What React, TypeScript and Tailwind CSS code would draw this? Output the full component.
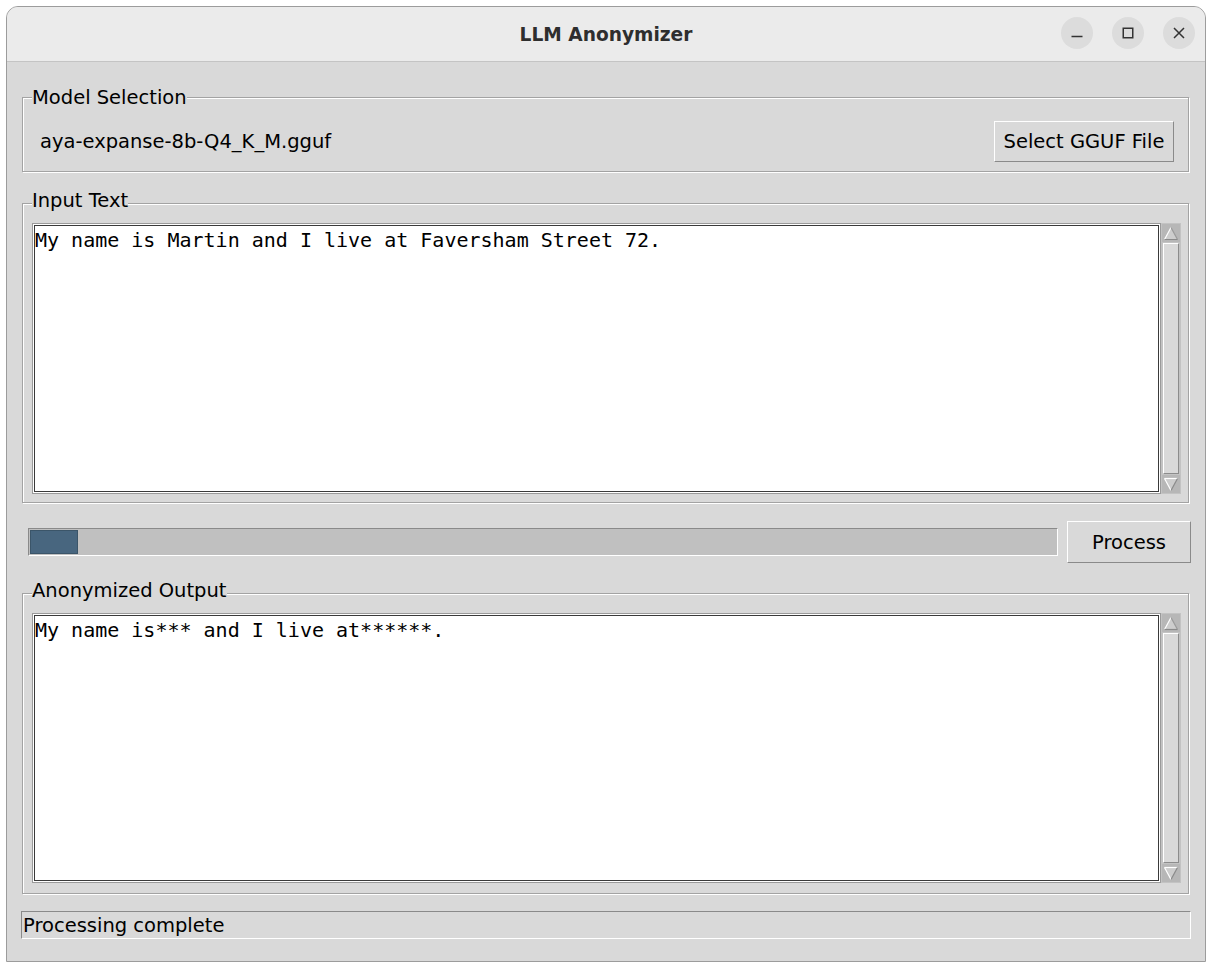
import React from "react";

function Arrow({ up }: { up: boolean }) {
  return (
    <div className="h-[18px] bg-[#b7b7b7] flex items-center justify-center shrink-0">
      {up ? (
        <svg width="16" height="15" viewBox="0 0 16 15">
          <polygon points="8,1.5 14.5,13.5 1.5,13.5" fill="#cdcdcd" />
          <line x1="8" y1="1.5" x2="1.5" y2="13.5" stroke="#ffffff" strokeWidth="1.2" />
          <line x1="8" y1="1.5" x2="14.5" y2="13.5" stroke="#9a9a9a" strokeWidth="1.2" />
          <line x1="1.5" y1="13.5" x2="14.5" y2="13.5" stroke="#8a8a8a" strokeWidth="1.2" />
        </svg>
      ) : (
        <svg width="16" height="15" viewBox="0 0 16 15">
          <polygon points="1.5,1.5 14.5,1.5 8,13.5" fill="#cdcdcd" />
          <line x1="1.5" y1="1.5" x2="14.5" y2="1.5" stroke="#ffffff" strokeWidth="1.2" />
          <line x1="1.5" y1="1.5" x2="8" y2="13.5" stroke="#ffffff" strokeWidth="1.2" />
          <line x1="14.5" y1="1.5" x2="8" y2="13.5" stroke="#8a8a8a" strokeWidth="1.2" />
        </svg>
      )}
    </div>
  );
}

function Scrollbar() {
  return (
    <div className="w-[20px] flex flex-col bg-[#c3c3c3] p-[1px] shrink-0">
      <Arrow up />
      <div className="flex-1 mx-[1px] my-[1px] bg-[#d9d9d9] border border-t-white border-l-white border-r-[#8c8c8c] border-b-[#8c8c8c]" />
      <Arrow up={false} />
    </div>
  );
}

function TextBox({ text, h }: { text: string; h: string }) {
  return (
    <div className={"flex " + h}>
      <div className="flex-1 bg-white border border-[#9a9a9a] shadow-[inset_0_0_0_1px_#fff,inset_0_0_0_2px_#3a3a3a] pt-[5px] pl-[2px] font-['DejaVu_Sans_Mono',monospace] text-[20px] leading-[23px] text-black whitespace-pre">
        {text}
      </div>
      <Scrollbar />
    </div>
  );
}

function GroupLabel({ children, up }: { children: React.ReactNode; up?: boolean }) {
  return (
    <div
      className={
        (up ? "-mt-[15px] mb-[3px]" : "-mt-[12px]") +
        " ml-[9px] self-start bg-[#d9d9d9] leading-[23px] text-black"
      }
    >
      {children}
    </div>
  );
}

const groupBox =
  "flex flex-col border border-[#a3a3a3] shadow-[1px_1px_0_#fff,inset_1px_1px_0_#fff]";

const raised =
  "bg-[#d9d9d9] border border-t-white border-l-white border-r-[#8a8a8a] border-b-[#8a8a8a] text-black leading-[23px]";

export default function App() {
  return (
    <div className="w-[1213px] h-[969px] bg-white pt-[6px] pl-[6px] font-['DejaVu_Sans',sans-serif] text-[19.5px]">
      <div className="w-[1200px] h-[956px] border border-[#9c9c9c] rounded-t-[12px] overflow-hidden flex flex-col bg-[#d9d9d9]">
        {/* title bar */}
        <div className="h-[55px] shrink-0 bg-[#ebebeb] border-b border-[#c4c4c4] flex items-center relative">
          <div className="flex-1 text-center font-['DejaVu_Sans',sans-serif] font-bold text-[18.6px] text-[#2e2e2e] pt-[1px]">
            LLM Anonymizer
          </div>
          <div className="absolute right-[10px] top-[10px] flex gap-[19px]">
            <div className="w-[32px] h-[32px] rounded-full bg-[#dcdcdc] flex items-center justify-center">
              <svg width="12" height="12" viewBox="0 0 12 12">
                <line x1="0.5" y1="9.5" x2="11.5" y2="9.5" stroke="#333" strokeWidth="1.5" />
              </svg>
            </div>
            <div className="w-[32px] h-[32px] rounded-full bg-[#dcdcdc] flex items-center justify-center">
              <svg width="12" height="12" viewBox="0 0 12 12">
                <rect x="1.25" y="1.25" width="9.5" height="9.5" fill="none" stroke="#333" strokeWidth="1.5" />
              </svg>
            </div>
            <div className="w-[32px] h-[32px] rounded-full bg-[#dcdcdc] flex items-center justify-center">
              <svg width="12" height="12" viewBox="0 0 12 12">
                <path d="M1 1 L11 11 M11 1 L1 11" stroke="#333" strokeWidth="1.5" />
              </svg>
            </div>
          </div>
        </div>

        {/* body */}
        <div className="flex-1 flex flex-col pt-[35px] pl-[15px] pr-[16px] pb-[22px]">
          {/* Model selection */}
          <div className={groupBox + " h-[75px]"}>
            <GroupLabel>Model Selection</GroupLabel>
            <div className="flex items-center justify-between pl-[17px] pr-[14px] mt-[12px]">
              <span className="text-black leading-[23px]">aya-expanse-8b-Q4_K_M.gguf</span>
              <div className={raised + " h-[41px] w-[180px] flex items-center justify-center"}>
                Select GGUF File
              </div>
            </div>
          </div>

          {/* Input text */}
          <div className={groupBox + " mt-[31px] h-[300px] pl-[9px] pr-[7px]"}>
            <div className="-ml-[9px] flex flex-col">
              <GroupLabel up>Input Text</GroupLabel>
            </div>
            <div className="mt-[8px]">
              <TextBox text="My name is Martin and I live at Faversham Street 72." h="h-[271px]" />
            </div>
          </div>

          {/* progress row */}
          <div className="mt-[18px] h-[42px] flex items-center gap-[9px] ml-[6px] -mr-[2px]">
            <div className="flex-1 h-[28px] bg-[#c0c0c0] border border-t-[#8a8a8a] border-l-[#8a8a8a] border-r-white border-b-white p-[1px]">
              <div className="w-[48px] h-full bg-[#48667f] border border-[#3b5569]" />
            </div>
            <div className={raised + " h-[42px] w-[124px] flex items-center justify-center"}>Process</div>
          </div>

          {/* Output */}
          <div className={groupBox + " mt-[30px] h-[301px] pl-[9px] pr-[7px]"}>
            <div className="-ml-[9px] flex flex-col">
              <GroupLabel up>Anonymized Output</GroupLabel>
            </div>
            <div className="mt-[8px]">
              <TextBox text="My name is*** and I live at******." h="h-[270px]" />
            </div>
          </div>

          {/* status */}
          <div className="mt-[17px] h-[28px] -ml-[1px] -mr-[2px] border border-t-[#8a8a8a] border-l-[#8a8a8a] border-r-white border-b-white flex items-center pl-[1px] leading-[23px] text-black">
            Processing complete
          </div>
        </div>
      </div>
    </div>
  );
}
